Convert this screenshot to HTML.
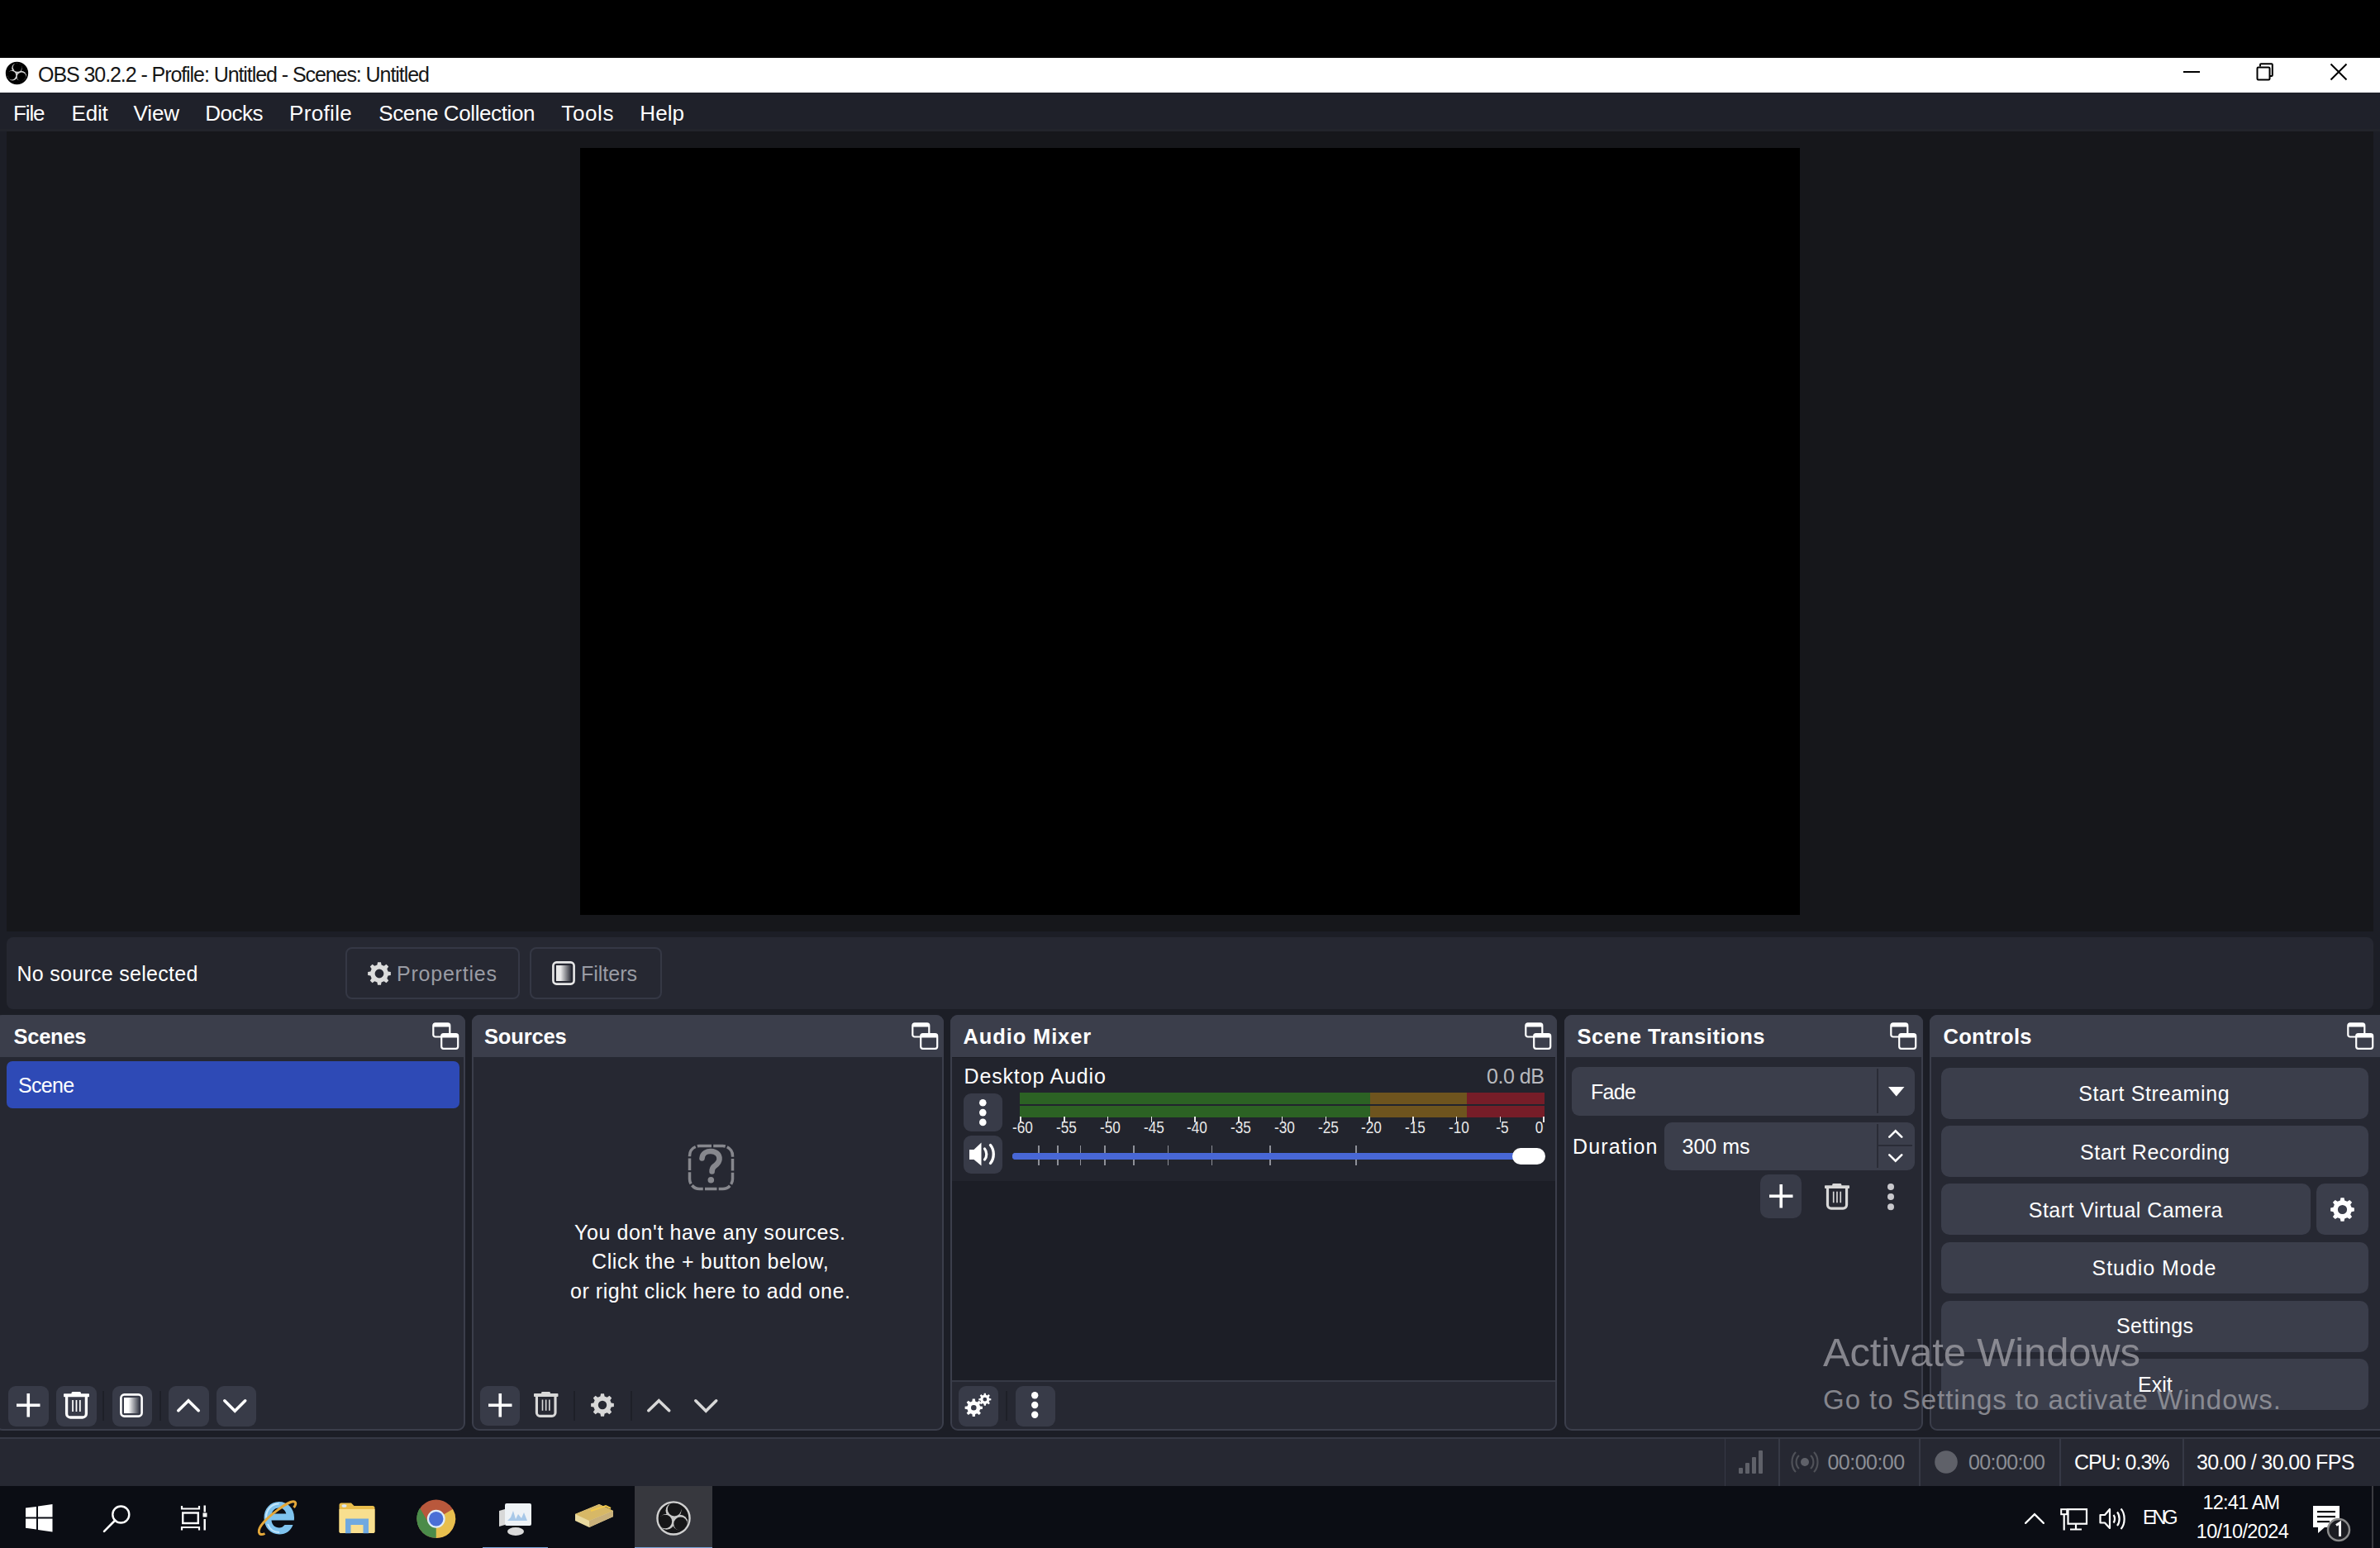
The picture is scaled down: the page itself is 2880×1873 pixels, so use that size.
<!DOCTYPE html><html><head><meta charset="utf-8"><style>
*{box-sizing:border-box;margin:0;padding:0}
html,body{width:2880px;height:1873px;overflow:hidden;background:#1c1e26;font-family:"Liberation Sans",sans-serif}
.a{position:absolute}
.t{position:absolute;white-space:pre;line-height:1}
svg.a{overflow:visible}
</style></head><body><div class="a" style="left:0px;top:0px;width:2880px;height:70px;background:#000;"></div>
<div class="a" style="left:0px;top:70px;width:2880px;height:42px;background:#fff;"></div>
<svg class="a" style="left:5.5px;top:74.3px" width="29" height="29" viewBox="0 0 46 46"><circle cx="23" cy="23" r="20.2" fill="#000" stroke="#000" stroke-width="3.0"/><clipPath id="oc55_743"><circle cx="23" cy="23" r="18.7"/></clipPath><g clip-path="url(#oc55_743)"><circle cx="23.00" cy="13.20" r="9.9" fill="#d5d5d5"/><circle cx="14.27" cy="27.45" r="9.9" fill="#d5d5d5"/><circle cx="31.22" cy="28.34" r="9.9" fill="#d5d5d5"/><circle cx="24.13" cy="11.59" r="8.7" fill="#000"/><circle cx="12.32" cy="27.18" r="8.7" fill="#000"/><circle cx="31.96" cy="30.16" r="8.7" fill="#000"/></g></svg>
<div class="t" style="left:46.0px;top:77.5px;font-size:25px;letter-spacing:-1.07px;color:#161616;">OBS 30.2.2 - Profile: Untitled - Scenes: Untitled</div>
<div class="a" style="left:2642px;top:86px;width:20px;height:2px;background:#000;"></div>
<svg class="a" style="left:2730px;top:76px" width="22" height="22" viewBox="0 0 22 22"><path d="M5,4.5 V2.2 a1,1 0 0 1 1,-1 H18.8 a1,1 0 0 1 1,1 V15 a1,1 0 0 1 -1,1 H16.5" fill="none" stroke="#000" stroke-width="2"/><rect x="1.5" y="5.5" width="15" height="15" rx="1.2" fill="none" stroke="#000" stroke-width="2"/></svg>
<svg class="a" style="left:2819px;top:76px" width="22" height="22" viewBox="0 0 22 22"><path d="M1.5,1.5 L20.5,20.5 M20.5,1.5 L1.5,20.5" stroke="#000" stroke-width="2"/></svg>
<div class="a" style="left:0px;top:112px;width:2880px;height:45px;background:#1f212a;"></div>
<div class="t" style="left:16.0px;top:123.5px;font-size:26px;letter-spacing:-1.14px;color:#fff;">File</div>
<div class="t" style="left:86.6px;top:123.5px;font-size:26px;letter-spacing:-0.24px;color:#fff;">Edit</div>
<div class="t" style="left:161.6px;top:123.5px;font-size:26px;letter-spacing:-0.13px;color:#fff;">View</div>
<div class="t" style="left:248.3px;top:123.5px;font-size:26px;letter-spacing:-0.51px;color:#fff;">Docks</div>
<div class="t" style="left:350.0px;top:123.5px;font-size:26px;letter-spacing:0.35px;color:#fff;">Profile</div>
<div class="t" style="left:458.3px;top:123.5px;font-size:26px;letter-spacing:-0.40px;color:#fff;">Scene Collection</div>
<div class="t" style="left:679.3px;top:123.5px;font-size:26px;letter-spacing:0.60px;color:#fff;">Tools</div>
<div class="t" style="left:774.3px;top:123.5px;font-size:26px;letter-spacing:0.07px;color:#fff;">Help</div>
<div class="a" style="left:0px;top:157px;width:2880px;height:1583px;background:#1c1e26;"></div>
<div class="a" style="left:0px;top:156px;width:2880px;height:3px;background:#22242b;"></div>
<div class="a" style="left:8px;top:159px;width:2864px;height:968px;background:#16171b;"></div>
<div class="a" style="left:702px;top:179px;width:1476px;height:928px;background:#000;"></div>
<div class="a" style="left:8px;top:1134px;width:2864px;height:87px;background:#262832;border-radius:8px;"></div>
<div class="t" style="left:20.5px;top:1166.0px;font-size:25px;letter-spacing:0.29px;color:#fff;">No source selected</div>
<div class="a" style="left:418px;top:1146px;width:211px;height:63px;background:transparent;border-radius:8px;border:2px solid #353845"></div>
<svg class="a" style="left:445px;top:1164px" width="28" height="28" viewBox="0 0 28 28"><path d="M24.61,11.42 L27.86,12.03 L27.86,15.97 L24.61,16.58 L23.33,19.68 L25.20,22.41 L22.41,25.20 L19.68,23.33 L16.58,24.61 L15.97,27.86 L12.03,27.86 L11.42,24.61 L8.32,23.33 L5.59,25.20 L2.80,22.41 L4.67,19.68 L3.39,16.58 L0.14,15.97 L0.14,12.03 L3.39,11.42 L4.67,8.32 L2.80,5.59 L5.59,2.80 L8.32,4.67 L11.42,3.39 L12.03,0.14 L15.97,0.14 L16.58,3.39 L19.68,4.67 L22.41,2.80 L25.20,5.59 L23.33,8.32Z M19.40,14.00 A5.4,5.4 0 1,0 8.60,14.00 A5.4,5.4 0 1,0 19.40,14.00Z" fill="#dcdcdc" fill-rule="evenodd"/></svg>
<div class="t" style="left:480.0px;top:1165.8px;font-size:25px;letter-spacing:0.78px;color:#9a9ca4;">Properties</div>
<div class="a" style="left:641px;top:1146px;width:160px;height:63px;background:transparent;border-radius:8px;border:2px solid #353845"></div>
<svg class="a" style="left:668px;top:1163px" width="28" height="29" viewBox="0 0 28 29"><defs><linearGradient id="fg0" x1="0" x2="1"><stop offset="0" stop-color="#e8e8e8"/><stop offset="0.3" stop-color="#e8e8e8"/><stop offset="1" stop-color="#e8e8e8" stop-opacity="0.05"/></linearGradient></defs><rect x="1.4" y="1.4" width="25.2" height="26.2" rx="4" fill="none" stroke="#e8e8e8" stroke-width="2.6"/><rect x="5" y="5" width="18" height="19" fill="url(#fg0)"/></svg>
<div class="t" style="left:703.0px;top:1165.8px;font-size:25px;letter-spacing:-0.01px;color:#9a9ca4;">Filters</div>
<div class="a" style="left:-6px;top:1228px;width:568.5px;height:503px;background:#262832;border:2px solid #3b3e4b;border-radius:9px"></div><div class="a" style="left:-6px;top:1228px;width:568.5px;height:51px;background:#3b3e4b;border-radius:9px 9px 0 0"></div><div class="t" style="left:16.5px;top:1241.8px;font-size:25.5px;font-weight:700;letter-spacing:-0.26px;color:#fff;">Scenes</div>
<svg class="a" style="left:523px;top:1237px" width="33" height="34" viewBox="0 0 33 34"><rect x="1.3" y="1.3" width="20" height="16.2" rx="2.5" fill="none" stroke="#fff" stroke-width="2.2"/><rect x="1.3" y="1.3" width="20" height="4.2" rx="1" fill="#fff"/><rect x="11.2" y="14.2" width="20" height="17.6" rx="2.5" fill="#3b3e4b" stroke="#fff" stroke-width="2.2"/><rect x="11.2" y="14.2" width="20" height="4.2" rx="1" fill="#fff"/></svg>
<div class="a" style="left:571px;top:1228px;width:571px;height:503px;background:#262832;border:2px solid #3b3e4b;border-radius:9px"></div><div class="a" style="left:571px;top:1228px;width:571px;height:51px;background:#3b3e4b;border-radius:9px 9px 0 0"></div><div class="t" style="left:586.0px;top:1241.8px;font-size:25.5px;font-weight:700;letter-spacing:-0.17px;color:#fff;">Sources</div>
<svg class="a" style="left:1103px;top:1237px" width="33" height="34" viewBox="0 0 33 34"><rect x="1.3" y="1.3" width="20" height="16.2" rx="2.5" fill="none" stroke="#fff" stroke-width="2.2"/><rect x="1.3" y="1.3" width="20" height="4.2" rx="1" fill="#fff"/><rect x="11.2" y="14.2" width="20" height="17.6" rx="2.5" fill="#3b3e4b" stroke="#fff" stroke-width="2.2"/><rect x="11.2" y="14.2" width="20" height="4.2" rx="1" fill="#fff"/></svg>
<div class="a" style="left:1150px;top:1228px;width:734px;height:503px;background:#262832;border:2px solid #3b3e4b;border-radius:9px"></div><div class="a" style="left:1150px;top:1228px;width:734px;height:51px;background:#3b3e4b;border-radius:9px 9px 0 0"></div><div class="t" style="left:1165.5px;top:1241.8px;font-size:25.5px;font-weight:700;letter-spacing:0.87px;color:#fff;">Audio Mixer</div>
<svg class="a" style="left:1845px;top:1237px" width="33" height="34" viewBox="0 0 33 34"><rect x="1.3" y="1.3" width="20" height="16.2" rx="2.5" fill="none" stroke="#fff" stroke-width="2.2"/><rect x="1.3" y="1.3" width="20" height="4.2" rx="1" fill="#fff"/><rect x="11.2" y="14.2" width="20" height="17.6" rx="2.5" fill="#3b3e4b" stroke="#fff" stroke-width="2.2"/><rect x="11.2" y="14.2" width="20" height="4.2" rx="1" fill="#fff"/></svg>
<div class="a" style="left:1892.5px;top:1228px;width:434.0px;height:503px;background:#262832;border:2px solid #3b3e4b;border-radius:9px"></div><div class="a" style="left:1892.5px;top:1228px;width:434.0px;height:51px;background:#3b3e4b;border-radius:9px 9px 0 0"></div><div class="t" style="left:1908.5px;top:1241.8px;font-size:25.5px;font-weight:700;letter-spacing:0.55px;color:#fff;">Scene Transitions</div>
<svg class="a" style="left:2287px;top:1237px" width="33" height="34" viewBox="0 0 33 34"><rect x="1.3" y="1.3" width="20" height="16.2" rx="2.5" fill="none" stroke="#fff" stroke-width="2.2"/><rect x="1.3" y="1.3" width="20" height="4.2" rx="1" fill="#fff"/><rect x="11.2" y="14.2" width="20" height="17.6" rx="2.5" fill="#3b3e4b" stroke="#fff" stroke-width="2.2"/><rect x="11.2" y="14.2" width="20" height="4.2" rx="1" fill="#fff"/></svg>
<div class="a" style="left:2335px;top:1228px;width:555px;height:503px;background:#262832;border:2px solid #3b3e4b;border-radius:9px"></div><div class="a" style="left:2335px;top:1228px;width:555px;height:51px;background:#3b3e4b;border-radius:9px 9px 0 0"></div><div class="t" style="left:2351.5px;top:1241.8px;font-size:25.5px;font-weight:700;letter-spacing:0.31px;color:#fff;">Controls</div>
<svg class="a" style="left:2840px;top:1237px" width="33" height="34" viewBox="0 0 33 34"><rect x="1.3" y="1.3" width="20" height="16.2" rx="2.5" fill="none" stroke="#fff" stroke-width="2.2"/><rect x="1.3" y="1.3" width="20" height="4.2" rx="1" fill="#fff"/><rect x="11.2" y="14.2" width="20" height="17.6" rx="2.5" fill="#3b3e4b" stroke="#fff" stroke-width="2.2"/><rect x="11.2" y="14.2" width="20" height="4.2" rx="1" fill="#fff"/></svg>
<div class="a" style="left:8px;top:1284px;width:548px;height:57px;background:#2e4ab6;border-radius:7px;"></div>
<div class="t" style="left:22.0px;top:1301.2px;font-size:25px;letter-spacing:-0.67px;color:#fff;">Scene</div>
<div class="a" style="left:10px;top:1677px;width:48.5px;height:48.5px;background:#383b48;border-radius:9px;"></div>
<div class="a" style="left:68px;top:1677px;width:48.5px;height:48.5px;background:#383b48;border-radius:9px;"></div>
<div class="a" style="left:135.5px;top:1677px;width:48.5px;height:48.5px;background:#383b48;border-radius:9px;"></div>
<div class="a" style="left:204px;top:1677px;width:48.5px;height:48.5px;background:#383b48;border-radius:9px;"></div>
<div class="a" style="left:261.5px;top:1677px;width:48.5px;height:48.5px;background:#383b48;border-radius:9px;"></div>
<svg class="a" style="left:19.5px;top:1686px" width="28.5" height="28.5" viewBox="0 0 28.5 28.5"><rect x="0" y="12.45" width="28.5" height="3.6" fill="#fff"/><rect x="12.45" y="0" width="3.6" height="28.5" fill="#fff"/></svg>
<svg class="a" style="left:76.5px;top:1684px" width="31.0" height="33.0" viewBox="0 0 31 33"><rect x="0" y="2.2" width="31" height="4" rx="0.8" fill="#fff"/><rect x="9.5" y="0" width="11.5" height="4" rx="1.5" fill="#fff"/><path d="M3.6,6 V26.5 a4.5,4.5 0 0 0 4.5,4.5 H22.9 a4.5,4.5 0 0 0 4.5,-4.5 V6" fill="none" stroke="#fff" stroke-width="3.3"/><rect x="10.2" y="10" width="1.7" height="14" fill="#fff"/><rect x="14.6" y="10" width="1.7" height="14" fill="#fff"/><rect x="19" y="10" width="1.7" height="14" fill="#fff"/></svg>
<div class="a" style="left:124px;top:1683px;width:2px;height:36px;background:#1e2028;"></div>
<svg class="a" style="left:145px;top:1686px" width="28" height="29" viewBox="0 0 28 29"><defs><linearGradient id="fg1" x1="0" x2="1"><stop offset="0" stop-color="#fff"/><stop offset="0.3" stop-color="#fff"/><stop offset="1" stop-color="#fff" stop-opacity="0.05"/></linearGradient></defs><rect x="1.4" y="1.4" width="25.2" height="26.2" rx="4" fill="none" stroke="#fff" stroke-width="2.6"/><rect x="5" y="5" width="18" height="19" fill="url(#fg1)"/></svg>
<div class="a" style="left:193px;top:1683px;width:2px;height:36px;background:#1e2028;"></div>
<svg class="a" style="left:213.5px;top:1692.5px" width="28" height="15.5" viewBox="0 0 28 15.5"><path d="M1.8,13.7 L14.0,1.8 L26.2,13.7" fill="none" stroke="#fff" stroke-width="3.6" stroke-linecap="round" stroke-linejoin="miter"/></svg>
<svg class="a" style="left:270px;top:1692.5px" width="28.5" height="16" viewBox="0 0 28.5 16"><path d="M1.8,1.8 L14.25,14.2 L26.7,1.8" fill="none" stroke="#fff" stroke-width="3.6" stroke-linecap="round" stroke-linejoin="miter"/></svg>
<svg class="a" style="left:832px;top:1384px" width="57" height="57" viewBox="0 0 57 57"><rect x="2.5" y="2.5" width="52" height="52" rx="12" fill="none" stroke="#86878d" stroke-width="3.5" stroke-dasharray="14.5 2.2 14.6 2.2"/><path d="M17.5,17.5 C18,11 24,8.8 28.5,9 C34,9.2 38.8,12.5 38.5,18.5 C38.3,23 35,25 32.5,27 C30.5,28.5 29.6,30.5 29.6,33.5" fill="none" stroke="#86878d" stroke-width="6.6" stroke-linecap="round"/><circle cx="28.3" cy="43.8" r="3.8" fill="#86878d"/></svg>
<div class="t" style="left:695.0px;top:1479.0px;font-size:25px;letter-spacing:0.60px;color:#fff;">You don&#x27;t have any sources.</div>
<div class="t" style="left:716.0px;top:1514.3px;font-size:25px;letter-spacing:0.62px;color:#fff;">Click the + button below,</div>
<div class="t" style="left:690.0px;top:1549.8px;font-size:25px;letter-spacing:0.55px;color:#fff;">or right click here to add one.</div>
<div class="a" style="left:581px;top:1676.5px;width:48px;height:48.5px;background:#383b48;border-radius:9px;"></div>
<svg class="a" style="left:590.5px;top:1686px" width="28.5" height="28.5" viewBox="0 0 28.5 28.5"><rect x="0" y="12.45" width="28.5" height="3.6" fill="#fff"/><rect x="12.45" y="0" width="3.6" height="28.5" fill="#fff"/></svg>
<svg class="a" style="left:646px;top:1684px" width="29.45" height="31.349999999999998" viewBox="0 0 31 33"><rect x="0" y="2.2" width="31" height="4" rx="0.8" fill="#d8d8d8"/><rect x="9.5" y="0" width="11.5" height="4" rx="1.5" fill="#d8d8d8"/><path d="M3.6,6 V26.5 a4.5,4.5 0 0 0 4.5,4.5 H22.9 a4.5,4.5 0 0 0 4.5,-4.5 V6" fill="none" stroke="#d8d8d8" stroke-width="3.3"/><rect x="10.2" y="10" width="1.7" height="14" fill="#d8d8d8"/><rect x="14.6" y="10" width="1.7" height="14" fill="#d8d8d8"/><rect x="19" y="10" width="1.7" height="14" fill="#d8d8d8"/></svg>
<div class="a" style="left:694px;top:1683px;width:2px;height:36px;background:#1e2028;"></div>
<svg class="a" style="left:715px;top:1686px" width="28" height="28" viewBox="0 0 28 28"><path d="M24.61,11.42 L27.86,12.03 L27.86,15.97 L24.61,16.58 L23.33,19.68 L25.20,22.41 L22.41,25.20 L19.68,23.33 L16.58,24.61 L15.97,27.86 L12.03,27.86 L11.42,24.61 L8.32,23.33 L5.59,25.20 L2.80,22.41 L4.67,19.68 L3.39,16.58 L0.14,15.97 L0.14,12.03 L3.39,11.42 L4.67,8.32 L2.80,5.59 L5.59,2.80 L8.32,4.67 L11.42,3.39 L12.03,0.14 L15.97,0.14 L16.58,3.39 L19.68,4.67 L22.41,2.80 L25.20,5.59 L23.33,8.32Z M19.20,14.00 A5.2,5.2 0 1,0 8.80,14.00 A5.2,5.2 0 1,0 19.20,14.00Z" fill="#d8d8d8" fill-rule="evenodd"/></svg>
<div class="a" style="left:763px;top:1683px;width:2px;height:36px;background:#1e2028;"></div>
<svg class="a" style="left:783px;top:1692.5px" width="28.5" height="15.5" viewBox="0 0 28.5 15.5"><path d="M1.8,13.7 L14.25,1.8 L26.7,13.7" fill="none" stroke="#d8d8d8" stroke-width="3.6" stroke-linecap="round" stroke-linejoin="miter"/></svg>
<svg class="a" style="left:840px;top:1692.5px" width="28.5" height="16" viewBox="0 0 28.5 16"><path d="M1.8,1.8 L14.25,14.2 L26.7,1.8" fill="none" stroke="#d8d8d8" stroke-width="3.6" stroke-linecap="round" stroke-linejoin="miter"/></svg>
<div class="a" style="left:1152px;top:1279px;width:730px;height:392px;background:#1c1e26;"></div>
<div class="a" style="left:1152px;top:1280px;width:730px;height:149px;background:#22242d;"></div>
<div class="a" style="left:1152px;top:1670px;width:730px;height:2px;background:#363945;"></div>
<div class="t" style="left:1166.5px;top:1289.5px;font-size:25px;letter-spacing:0.85px;color:#fff;">Desktop Audio</div>
<div class="t" style="left:1799.0px;top:1289.5px;font-size:25px;letter-spacing:-0.46px;color:#b8b9be;">0.0 dB</div>
<div class="a" style="left:1166px;top:1322.5px;width:46.5px;height:46.5px;background:#383b48;border-radius:9px;"></div>
<svg class="a" style="left:1184.0px;top:1328.8px" width="10.6" height="34.2" viewBox="0 0 10.6 34.2"><circle cx="5.3" cy="5.3" r="4.3" fill="#fff"/><circle cx="5.3" cy="17.1" r="4.3" fill="#fff"/><circle cx="5.3" cy="28.900000000000002" r="4.3" fill="#fff"/></svg>
<div class="a" style="left:1166px;top:1374px;width:46.5px;height:46px;background:#383b48;border-radius:9px;"></div>
<svg class="a" style="left:1172px;top:1382px" width="36" height="30" viewBox="0 0 36 30"><path d="M1,9 H6.5 L15.5,0.5 V28.5 L6.5,21 H1 Z" fill="#fff"/><path d="M19.5,8 C22.5,11.5 22.5,17.5 19.5,21" fill="none" stroke="#fff" stroke-width="3.2" stroke-linecap="round"/><path d="M26.5,3.5 C31.5,9.5 31.5,19.5 26.5,25.5" fill="none" stroke="#fff" stroke-width="3.4" stroke-linecap="round"/></svg>
<div class="a" style="left:1234px;top:1322px;width:423.5999999999999px;height:14px;background:#2c6224;"></div>
<div class="a" style="left:1657.6px;top:1322px;width:117.20000000000005px;height:14px;background:#6e541e;"></div>
<div class="a" style="left:1774.8px;top:1322px;width:94.20000000000005px;height:14px;background:#761d28;"></div>
<div class="a" style="left:1234px;top:1338px;width:423.5999999999999px;height:13.5px;background:#2c6224;"></div>
<div class="a" style="left:1657.6px;top:1338px;width:117.20000000000005px;height:13.5px;background:#6e541e;"></div>
<div class="a" style="left:1774.8px;top:1338px;width:94.20000000000005px;height:13.5px;background:#761d28;"></div>
<div class="a" style="left:1234.25px;top:1351px;width:1.5px;height:7px;background:#e8e8e8;"></div>
<div class="t" style="left:1223.3px;top:1354.0px;font-size:20px;color:#e8e8e8;transform:scaleX(0.86);transform-origin:center">-60</div>
<div class="a" style="left:1287.0px;top:1351px;width:1.5px;height:7px;background:#e8e8e8;"></div>
<div class="t" style="left:1276.1px;top:1354.0px;font-size:20px;color:#e8e8e8;transform:scaleX(0.86);transform-origin:center">-55</div>
<div class="a" style="left:1339.75px;top:1351px;width:1.5px;height:7px;background:#e8e8e8;"></div>
<div class="t" style="left:1328.8px;top:1354.0px;font-size:20px;color:#e8e8e8;transform:scaleX(0.86);transform-origin:center">-50</div>
<div class="a" style="left:1392.5px;top:1351px;width:1.5px;height:7px;background:#e8e8e8;"></div>
<div class="t" style="left:1381.6px;top:1354.0px;font-size:20px;color:#e8e8e8;transform:scaleX(0.86);transform-origin:center">-45</div>
<div class="a" style="left:1445.25px;top:1351px;width:1.5px;height:7px;background:#e8e8e8;"></div>
<div class="t" style="left:1434.3px;top:1354.0px;font-size:20px;color:#e8e8e8;transform:scaleX(0.86);transform-origin:center">-40</div>
<div class="a" style="left:1498.0px;top:1351px;width:1.5px;height:7px;background:#e8e8e8;"></div>
<div class="t" style="left:1487.1px;top:1354.0px;font-size:20px;color:#e8e8e8;transform:scaleX(0.86);transform-origin:center">-35</div>
<div class="a" style="left:1550.75px;top:1351px;width:1.5px;height:7px;background:#e8e8e8;"></div>
<div class="t" style="left:1539.8px;top:1354.0px;font-size:20px;color:#e8e8e8;transform:scaleX(0.86);transform-origin:center">-30</div>
<div class="a" style="left:1603.5px;top:1351px;width:1.5px;height:7px;background:#e8e8e8;"></div>
<div class="t" style="left:1592.6px;top:1354.0px;font-size:20px;color:#e8e8e8;transform:scaleX(0.86);transform-origin:center">-25</div>
<div class="a" style="left:1656.25px;top:1351px;width:1.5px;height:7px;background:#e8e8e8;"></div>
<div class="t" style="left:1645.3px;top:1354.0px;font-size:20px;color:#e8e8e8;transform:scaleX(0.86);transform-origin:center">-20</div>
<div class="a" style="left:1709.0px;top:1351px;width:1.5px;height:7px;background:#e8e8e8;"></div>
<div class="t" style="left:1698.1px;top:1354.0px;font-size:20px;color:#e8e8e8;transform:scaleX(0.86);transform-origin:center">-15</div>
<div class="a" style="left:1761.75px;top:1351px;width:1.5px;height:7px;background:#e8e8e8;"></div>
<div class="t" style="left:1750.8px;top:1354.0px;font-size:20px;color:#e8e8e8;transform:scaleX(0.86);transform-origin:center">-10</div>
<div class="a" style="left:1814.5px;top:1351px;width:1.5px;height:7px;background:#e8e8e8;"></div>
<div class="t" style="left:1809.2px;top:1354.0px;font-size:20px;color:#e8e8e8;transform:scaleX(0.86);transform-origin:center">-5</div>
<div class="a" style="left:1867.25px;top:1351px;width:1.5px;height:7px;background:#e8e8e8;"></div>
<div class="t" style="left:1857.4px;top:1354.0px;font-size:20px;color:#e8e8e8;transform:scaleX(0.86);transform-origin:center">0</div>
<div class="a" style="left:1225px;top:1395px;width:644px;height:8px;background:#4867d6;border-radius:4px;"></div>
<div class="a" style="left:1256.05px;top:1386px;width:1.5px;height:24px;background:#8e9098;"></div>
<div class="a" style="left:1279.25px;top:1386px;width:1.5px;height:24px;background:#8e9098;"></div>
<div class="a" style="left:1306.95px;top:1386px;width:1.5px;height:24px;background:#8e9098;"></div>
<div class="a" style="left:1336.25px;top:1386px;width:1.5px;height:24px;background:#8e9098;"></div>
<div class="a" style="left:1371.25px;top:1386px;width:1.5px;height:24px;background:#8e9098;"></div>
<div class="a" style="left:1412.85px;top:1386px;width:1.5px;height:24px;background:#8e9098;"></div>
<div class="a" style="left:1465.65px;top:1386px;width:1.5px;height:24px;background:#8e9098;"></div>
<div class="a" style="left:1536.25px;top:1386px;width:1.5px;height:24px;background:#8e9098;"></div>
<div class="a" style="left:1640.05px;top:1386px;width:1.5px;height:24px;background:#8e9098;"></div>
<div class="a" style="left:1225px;top:1395px;width:610px;height:8px;background:#4867d6;border-radius:4px;"></div>
<div class="a" style="left:1829.5px;top:1389px;width:40px;height:19.5px;background:#fff;border-radius:10px;"></div>
<div class="a" style="left:1160px;top:1677px;width:48px;height:48.5px;background:#383b48;border-radius:9px;"></div>
<svg class="a" style="left:1166px;top:1685px" width="36" height="34" viewBox="0 0 36 34"><path d="M20.07,16.41 L22.99,16.78 L22.99,19.82 L20.07,20.19 L19.13,22.46 L20.94,24.78 L18.78,26.94 L16.46,25.13 L14.19,26.07 L13.82,28.99 L10.78,28.99 L10.41,26.07 L8.14,25.13 L5.82,26.94 L3.66,24.78 L5.47,22.46 L4.53,20.19 L1.61,19.82 L1.61,16.78 L4.53,16.41 L5.47,14.14 L3.66,11.82 L5.82,9.66 L8.14,11.47 L10.41,10.53 L10.78,7.61 L13.82,7.61 L14.19,10.53 L16.46,11.47 L18.78,9.66 L20.94,11.82 L19.13,14.14Z M15.60,18.30 A3.3,3.3 0 1,0 9.00,18.30 A3.3,3.3 0 1,0 15.60,18.30Z" fill="#fff" fill-rule="evenodd"/><path d="M31.24,6.88 L33.32,7.13 L33.32,9.27 L31.24,9.52 L30.58,11.11 L31.88,12.76 L30.36,14.28 L28.71,12.98 L27.12,13.64 L26.87,15.72 L24.73,15.72 L24.48,13.64 L22.89,12.98 L21.24,14.28 L19.72,12.76 L21.02,11.11 L20.36,9.52 L18.28,9.27 L18.28,7.13 L20.36,6.88 L21.02,5.29 L19.72,3.64 L21.24,2.12 L22.89,3.42 L24.48,2.76 L24.73,0.68 L26.87,0.68 L27.12,2.76 L28.71,3.42 L30.36,2.12 L31.88,3.64 L30.58,5.29Z M28.20,8.20 A2.4,2.4 0 1,0 23.40,8.20 A2.4,2.4 0 1,0 28.20,8.20Z" fill="#fff" fill-rule="evenodd"/></svg>
<div class="a" style="left:1217px;top:1683px;width:2px;height:36px;background:#1e2028;"></div>
<div class="a" style="left:1229px;top:1677px;width:48px;height:48.5px;background:#383b48;border-radius:9px;"></div>
<svg class="a" style="left:1247.1px;top:1683.3px" width="10.4" height="34.0" viewBox="0 0 10.4 34.0"><circle cx="5.2" cy="5.2" r="4.2" fill="#fff"/><circle cx="5.2" cy="17.0" r="4.2" fill="#fff"/><circle cx="5.2" cy="28.8" r="4.2" fill="#fff"/></svg>
<div class="a" style="left:1902px;top:1290.5px;width:415px;height:59px;background:#3b3e4b;border-radius:9px;"></div>
<div class="a" style="left:2270.5px;top:1293px;width:2px;height:54px;background:#2a2c36;"></div>
<svg class="a" style="left:2285px;top:1315px" width="20" height="12" viewBox="0 0 20 12"><path d="M0,0 H19.5 L9.75,11.5 Z" fill="#fff"/></svg>
<div class="t" style="left:1925.0px;top:1309.0px;font-size:25px;letter-spacing:-0.66px;color:#fff;">Fade</div>
<div class="t" style="left:1903.0px;top:1375.0px;font-size:25px;letter-spacing:1.13px;color:#fff;">Duration</div>
<div class="a" style="left:2014px;top:1357.5px;width:303px;height:58px;background:#3b3e4b;border-radius:9px;"></div>
<div class="a" style="left:2270.5px;top:1360px;width:2px;height:53px;background:#2a2c36;"></div>
<div class="a" style="left:2272px;top:1385px;width:42px;height:2px;background:#2a2c36;"></div>
<svg class="a" style="left:2285px;top:1367px" width="17.5" height="10" viewBox="0 0 17.5 10"><path d="M1.3,8.7 L8.75,1.3 L16.2,8.7" fill="none" stroke="#fff" stroke-width="2.6" stroke-linecap="round" stroke-linejoin="miter"/></svg>
<svg class="a" style="left:2285px;top:1395.5px" width="17.5" height="10" viewBox="0 0 17.5 10"><path d="M1.3,1.3 L8.75,8.7 L16.2,1.3" fill="none" stroke="#fff" stroke-width="2.6" stroke-linecap="round" stroke-linejoin="miter"/></svg>
<div class="t" style="left:2035.5px;top:1375.0px;font-size:25px;color:#fff;">300 ms</div>
<div class="a" style="left:2129.5px;top:1420.5px;width:50px;height:53.5px;background:#383b48;border-radius:10px;"></div>
<svg class="a" style="left:2140.5px;top:1433px" width="28.5" height="28.5" viewBox="0 0 28.5 28.5"><rect x="0" y="12.45" width="28.5" height="3.6" fill="#fff"/><rect x="12.45" y="0" width="3.6" height="28.5" fill="#fff"/></svg>
<svg class="a" style="left:2207.5px;top:1432px" width="30.07" height="32.01" viewBox="0 0 31 33"><rect x="0" y="2.2" width="31" height="4" rx="0.8" fill="#d8d8d8"/><rect x="9.5" y="0" width="11.5" height="4" rx="1.5" fill="#d8d8d8"/><path d="M3.6,6 V26.5 a4.5,4.5 0 0 0 4.5,4.5 H22.9 a4.5,4.5 0 0 0 4.5,-4.5 V6" fill="none" stroke="#d8d8d8" stroke-width="3.3"/><rect x="10.2" y="10" width="1.7" height="14" fill="#d8d8d8"/><rect x="14.6" y="10" width="1.7" height="14" fill="#d8d8d8"/><rect x="19" y="10" width="1.7" height="14" fill="#d8d8d8"/></svg>
<svg class="a" style="left:2283.0px;top:1430.5px" width="10.0" height="34.2" viewBox="0 0 10.0 34.2"><circle cx="5.0" cy="5.0" r="4.0" fill="#c8c8cc"/><circle cx="5.0" cy="17.1" r="4.0" fill="#c8c8cc"/><circle cx="5.0" cy="29.2" r="4.0" fill="#c8c8cc"/></svg>
<div class="a" style="left:2349px;top:1291.5px;width:517px;height:62px;background:#3b3e4b;border-radius:10px;"></div>
<div class="a" style="left:2349px;top:1362px;width:517px;height:62px;background:#3b3e4b;border-radius:10px;"></div>
<div class="a" style="left:2349px;top:1431.5px;width:446.5px;height:62px;background:#3b3e4b;border-radius:10px;"></div>
<div class="a" style="left:2349px;top:1503px;width:517px;height:62px;background:#3b3e4b;border-radius:10px;"></div>
<div class="a" style="left:2349px;top:1573.5px;width:517px;height:62px;background:#3b3e4b;border-radius:10px;"></div>
<div class="a" style="left:2349px;top:1644px;width:517px;height:62px;background:#3b3e4b;border-radius:10px;"></div>
<div class="a" style="left:2803px;top:1431.5px;width:63px;height:62px;background:#3b3e4b;border-radius:10px;"></div>
<svg class="a" style="left:2819.5px;top:1449px" width="29" height="29" viewBox="0 0 29 29"><path d="M25.49,11.83 L28.86,12.46 L28.86,16.54 L25.49,17.17 L24.16,20.38 L26.10,23.21 L23.21,26.10 L20.38,24.16 L17.17,25.49 L16.54,28.86 L12.46,28.86 L11.83,25.49 L8.62,24.16 L5.79,26.10 L2.90,23.21 L4.84,20.38 L3.51,17.17 L0.14,16.54 L0.14,12.46 L3.51,11.83 L4.84,8.62 L2.90,5.79 L5.79,2.90 L8.62,4.84 L11.83,3.51 L12.46,0.14 L16.54,0.14 L17.17,3.51 L20.38,4.84 L23.21,2.90 L26.10,5.79 L24.16,8.62Z M20.10,14.50 A5.6,5.6 0 1,0 8.90,14.50 A5.6,5.6 0 1,0 20.10,14.50Z" fill="#fff" fill-rule="evenodd"/></svg>
<div class="t" style="left:2515.2px;top:1311.2px;font-size:25px;letter-spacing:0.63px;color:#fff;">Start Streaming</div>
<div class="t" style="left:2517.0px;top:1381.7px;font-size:25px;letter-spacing:0.52px;color:#fff;">Start Recording</div>
<div class="t" style="left:2454.8px;top:1451.7px;font-size:25px;letter-spacing:0.45px;color:#fff;">Start Virtual Camera</div>
<div class="t" style="left:2531.5px;top:1522.0px;font-size:25px;letter-spacing:0.96px;color:#fff;">Studio Mode</div>
<div class="t" style="left:2561.0px;top:1592.2px;font-size:25px;letter-spacing:0.38px;color:#fff;">Settings</div>
<div class="t" style="left:2587.1px;top:1662.5px;font-size:25px;letter-spacing:-0.06px;color:#fff;">Exit</div>
<div class="t" style="left:2206.0px;top:1611.8px;font-size:49px;letter-spacing:-0.18px;color:rgba(160,160,166,0.78);">Activate Windows</div>
<div class="t" style="left:2206.0px;top:1677.0px;font-size:33px;letter-spacing:0.97px;color:rgba(160,160,166,0.78);">Go to Settings to activate Windows.</div>
<div class="a" style="left:0px;top:1739px;width:2880px;height:1.5px;background:#363945;"></div>
<div class="a" style="left:0px;top:1740.5px;width:2880px;height:57.5px;background:#262832;"></div>
<div class="a" style="left:2086.5px;top:1740.5px;width:1.5px;height:57.5px;background:#363945;"></div>
<div class="a" style="left:2152px;top:1740.5px;width:1.5px;height:57.5px;background:#363945;"></div>
<div class="a" style="left:2322.2px;top:1740.5px;width:1.5px;height:57.5px;background:#363945;"></div>
<div class="a" style="left:2492px;top:1740.5px;width:1.5px;height:57.5px;background:#363945;"></div>
<div class="a" style="left:2641.3px;top:1740.5px;width:1.5px;height:57.5px;background:#363945;"></div>
<svg class="a" style="left:2103px;top:1754px" width="32" height="30" viewBox="0 0 32 30"><rect x="1" y="22" width="5" height="7" rx="1" fill="#5f6169"/><rect x="9" y="16" width="5" height="13" rx="1" fill="#5f6169"/><rect x="17" y="9" width="5" height="20" rx="1" fill="#5f6169"/><rect x="25" y="1" width="5" height="28" rx="1" fill="#5f6169"/></svg>
<svg class="a" style="left:2168px;top:1754px" width="32" height="30" viewBox="0 0 32 30"><circle cx="16" cy="15" r="5" fill="#5f6169"/><path d="M9,7 C4.5,11 4.5,19 9,23 M23,7 C27.5,11 27.5,19 23,23 M5,3 C-1,9 -1,21 5,27 M27,3 C33,9 33,21 27,27" fill="none" stroke="#4f5158" stroke-width="2.2"/></svg>
<div class="t" style="left:2211.5px;top:1757.3px;font-size:25px;letter-spacing:-0.53px;color:#8c8e95;">00:00:00</div>
<svg class="a" style="left:2340px;top:1754px" width="30" height="30" viewBox="0 0 30 30"><circle cx="15" cy="15" r="13.8" fill="#5f6169"/></svg>
<div class="t" style="left:2382.0px;top:1757.3px;font-size:25px;letter-spacing:-0.62px;color:#8c8e95;">00:00:00</div>
<div class="t" style="left:2510.0px;top:1757.3px;font-size:25px;letter-spacing:-1.02px;color:#fff;">CPU: 0.3%</div>
<div class="t" style="left:2658.0px;top:1757.3px;font-size:25px;letter-spacing:-0.63px;color:#fff;">30.00 / 30.00 FPS</div>
<div class="a" style="left:0px;top:1798px;width:2880px;height:75px;background:#0b0d14;"></div>
<svg class="a" style="left:31px;top:1820px" width="33" height="34" viewBox="0 0 33 34"><path d="M0,4.6 L13,2.9 V15.6 H0 Z M15,2.6 L32.5,0 V15.6 H15 Z M0,17.6 H13 V30.5 L0,28.8 Z M15,17.6 H32.5 V33.5 L15,31 Z" fill="#fff"/></svg>
<svg class="a" style="left:124px;top:1820px" width="36" height="36" viewBox="0 0 36 36"><circle cx="22.3" cy="12.5" r="10" fill="none" stroke="#fff" stroke-width="2.4"/><path d="M15.3,19.5 L2,32.8" stroke="#fff" stroke-width="2.6" stroke-linecap="round"/></svg>
<svg class="a" style="left:219px;top:1821px" width="34" height="32" viewBox="0 0 34 32"><path d="M1,1 V4.5 H22 V1 M1,30.5 V27 H22 V30.5" fill="none" stroke="#fff" stroke-width="2.2"/><rect x="2.2" y="9.5" width="18.6" height="12.5" fill="none" stroke="#fff" stroke-width="2.4"/><rect x="27.5" y="0.5" width="2.4" height="8" fill="#fff"/><rect x="26.5" y="9.5" width="5" height="5" fill="#fff"/><rect x="27.5" y="17" width="2.4" height="13.5" fill="#fff"/></svg>
<svg class="a" style="left:311px;top:1814px" width="48" height="46" viewBox="0 0 48 46"><path d="M26.5,3 C16,3 8.5,11.5 8.5,22.5 C8.5,34 16.5,42.5 27,42.5 C35,42.5 41,38 43.5,31 H33.5 C31.5,33.5 29.5,34.5 27,34.5 C21.5,34.5 17.8,30.5 17.5,25.5 H44.8 C45,24.2 45,23 45,22 C45,11 37,3 26.5,3 Z M17.8,17.5 C18.8,13.3 22.3,10.5 26.6,10.5 C31,10.5 34.5,13.3 35.3,17.5 Z" fill="#7fc3ee"/><path d="M26.5,5.5 C17.5,5.5 11,13 11,22.5 M13,30 C15.5,36.5 20.5,40 27,40" fill="none" stroke="#c4e6fb" stroke-width="2"/><path d="M9.5,41.5 C1.5,45.5 -1,38 8,28 C17,18 33,6.5 40.5,3.5 C47,1 48.5,5 44.5,10" fill="none" stroke="#e4a83a" stroke-width="3"/></svg>
<svg class="a" style="left:409.5px;top:1817.5px" width="44" height="38" viewBox="0 0 44 38"><path d="M0.5,3 C0.5,1.5 1.5,0.5 3,0.5 H15 L18.5,4 H41 C42.5,4 43.5,5 43.5,6.5 V35 C43.5,36.5 42.5,37 41,37 H3 C1.5,37 0.5,36.5 0.5,35 Z" fill="#e9bd4c"/><path d="M0.5,8 H43.5 V35 C43.5,36.5 42.5,37 41,37 H3 C1.5,37 0.5,36.5 0.5,35 Z" fill="#f8df8f"/><ellipse cx="6.5" cy="4" rx="3" ry="1.8" fill="#d8e8f8"/><path d="M8,19.5 H36 V37.2 H29.5 V27 H14.5 V37.2 H8 Z" fill="#6fa9e0"/></svg>
<svg class="a" style="left:503.5px;top:1813.5px" width="47.5" height="47.5" viewBox="0 0 48 48"><circle cx="24" cy="24" r="23.5" fill="#b9583c"/><path d="M24,24 L3.6,35.75 A23.5,23.5 0 0 1 4.1,11.2 L14,28 Z" fill="#4b8b4a"/><path d="M14,28 L4.1,11.2 A23.5,23.5 0 0 0 3.6,35.75 A23.5,23.5 0 0 0 24,47.5 L30,33.5 Z" fill="#4b8b4a"/><path d="M24,24 L44.4,12.25 A23.5,23.5 0 0 1 24,47.5 Z" fill="#e7bf4e"/><circle cx="24" cy="24" r="11" fill="#dfeefa"/><circle cx="24" cy="24" r="8.8" fill="#4a6fd6"/></svg>
<div class="a" style="left:584px;top:1872px;width:79px;height:1px;background:#7aa3d8;"></div>
<svg class="a" style="left:600px;top:1818px" width="44" height="42" viewBox="0 0 44 42"><path d="M4,10 L11,8 V27 L4,29 Z" fill="#d8d8d8"/><rect x="11" y="1" width="32" height="27" rx="2" fill="#eef2f6"/><path d="M14,22 L18,18 L21,10 L24,20 L27,14 L31,19 L34,12 L38,22 Z" fill="#a8c8e8"/><ellipse cx="24" cy="35" rx="10" ry="5" fill="#dadada"/></svg>
<svg class="a" style="left:695px;top:1818px" width="48" height="32" viewBox="0 0 48 32"><path d="M1,14 L30,2 L47,10 L47,17 L18,30 L1,22 Z" fill="#e9d9a0"/><path d="M1,14 L30,2 L47,10 L18,22 Z" fill="#d7b866"/><path d="M18,22 L47,10 V17 L18,30 Z" fill="#c9b07a"/><path d="M20,10 L38,4 L44,7" fill="none" stroke="#f2c94c" stroke-width="2"/></svg>
<div class="a" style="left:768px;top:1798px;width:93.5px;height:75px;background:#37383e;"></div>
<div class="a" style="left:768px;top:1872px;width:93.5px;height:1px;background:#7aa3d8;"></div>
<svg class="a" style="left:793.2px;top:1814.9px" width="44" height="44" viewBox="0 0 46 46"><circle cx="23" cy="23" r="20.45" fill="#161618" stroke="#d0d0d0" stroke-width="2.5"/><clipPath id="oc7932_18149"><circle cx="23" cy="23" r="19.2"/></clipPath><g clip-path="url(#oc7932_18149)"><circle cx="23.00" cy="13.20" r="9.9" fill="#c8c8c8"/><circle cx="14.27" cy="27.45" r="9.9" fill="#c8c8c8"/><circle cx="31.22" cy="28.34" r="9.9" fill="#c8c8c8"/><circle cx="24.13" cy="11.59" r="8.7" fill="#161618"/><circle cx="12.32" cy="27.18" r="8.7" fill="#161618"/><circle cx="31.96" cy="30.16" r="8.7" fill="#161618"/></g></svg>
<svg class="a" style="left:2450px;top:1830.5px" width="24" height="13" viewBox="0 0 24 13"><path d="M1.1,11.9 L12.0,1.1 L22.9,11.9" fill="none" stroke="#fff" stroke-width="2.2" stroke-linecap="round" stroke-linejoin="miter"/></svg>
<svg class="a" style="left:2493px;top:1825px" width="34" height="28" viewBox="0 0 34 28"><rect x="9.5" y="1.2" width="22.5" height="17.5" fill="none" stroke="#fff" stroke-width="2.2"/><rect x="1.2" y="1.2" width="7" height="6" fill="none" stroke="#fff" stroke-width="2"/><path d="M4.7,7 V26.5 M12,25.5 H26 M19,19 V25.5" stroke="#fff" stroke-width="2.2"/></svg>
<svg class="a" style="left:2540px;top:1823px" width="34" height="30" viewBox="0 0 34 30"><path d="M1.5,10 H7 L13,3 V26 L7,19.5 H1.5 Z" fill="none" stroke="#fff" stroke-width="2.2" stroke-linejoin="round"/><path d="M17.5,10 C19.5,12.5 19.5,17 17.5,19.5 M22,6.5 C25.5,10.5 25.5,19 22,23 M26.5,2.5 C32,8.5 32,21 26.5,27" fill="none" stroke="#fff" stroke-width="2.2"/></svg>
<div class="t" style="left:2593.0px;top:1824.5px;font-size:23.5px;letter-spacing:-4.22px;color:#fff;">ENG</div>
<div class="t" style="left:2665.5px;top:1807.0px;font-size:23.5px;letter-spacing:-0.80px;color:#fff;">12:41 AM</div>
<div class="t" style="left:2657.7px;top:1842.2px;font-size:23.5px;letter-spacing:-0.62px;color:#fff;">10/10/2024</div>
<svg class="a" style="left:2798px;top:1821px" width="50" height="50" viewBox="0 0 50 50"><path d="M1,1 H33 V27 H15 L7,34 V27 H1 Z" fill="#fff"/><rect x="6" y="7" width="22" height="2.2" fill="#0b0d14"/><rect x="6" y="13" width="22" height="2.2" fill="#0b0d14"/><rect x="6" y="19" width="15" height="2.2" fill="#0b0d14"/><circle cx="32" cy="30" r="13" fill="#1c1d22" stroke="#8a8a8a" stroke-width="2.5"/><path d="M29,24.5 L33.5,21.5 V38" fill="none" stroke="#fff" stroke-width="3"/></svg>
<div class="a" style="left:2870px;top:1798px;width:2px;height:75px;background:#3a3b40;"></div></body></html>
